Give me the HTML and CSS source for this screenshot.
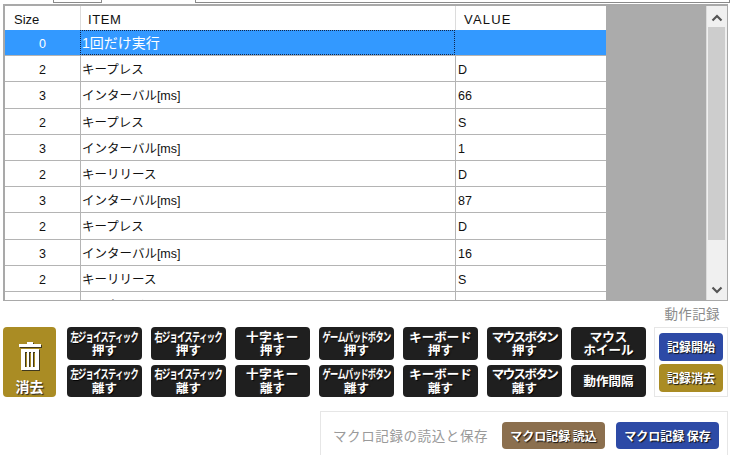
FILE: index.html
```html
<!DOCTYPE html>
<html lang="ja">
<head>
<meta charset="utf-8">
<title>マクロ記録</title>
<link rel="stylesheet" href="styles.css">
</head>
<body>
<div class="strip"><span class="stub stub-a"></span><span class="stub stub-b"></span></div>
<section class="panel">
  <div class="sheet">
    <div class="row head"><div class="c size">Size</div><div class="c item">ITEM</div><div class="c value">VALUE</div></div>
    <div class="row sel"><div class="c size">0</div><div class="c item">1回だけ実行</div><div class="c value"></div></div>
    <div class="row"><div class="c size">2</div><div class="c item">キープレス</div><div class="c value">D</div></div>
    <div class="row"><div class="c size">3</div><div class="c item">インターバル[ms]</div><div class="c value">66</div></div>
    <div class="row"><div class="c size">2</div><div class="c item">キープレス</div><div class="c value">S</div></div>
    <div class="row"><div class="c size">3</div><div class="c item">インターバル[ms]</div><div class="c value">1</div></div>
    <div class="row"><div class="c size">2</div><div class="c item">キーリリース</div><div class="c value">D</div></div>
    <div class="row"><div class="c size">3</div><div class="c item">インターバル[ms]</div><div class="c value">87</div></div>
    <div class="row"><div class="c size">2</div><div class="c item">キープレス</div><div class="c value">D</div></div>
    <div class="row"><div class="c size">3</div><div class="c item">インターバル[ms]</div><div class="c value">16</div></div>
    <div class="row"><div class="c size">2</div><div class="c item">キーリリース</div><div class="c value">S</div></div>
    <div class="row"><div class="c size">3</div><div class="c item">インターバル[ms]</div><div class="c value"></div></div>
  </div>
  <div class="blank"></div>
  <div class="scroll">
    <div class="arrow arrow-up"><svg width="12" height="8" viewBox="0 0 12 8"><path d="M1.5 6.5 6 2l4.5 4.5" fill="none" stroke="#555" stroke-width="2.2"/></svg></div>
    <div class="thumb"></div>
    <div class="track"></div>
    <div class="arrow"><svg width="12" height="8" viewBox="0 0 12 8"><path d="M1.5 1.5 6 6l4.5-4.5" fill="none" stroke="#555" stroke-width="2.2"/></svg></div>
  </div>
</section>
<div class="caption">動作記録</div>
<section class="actions">
  <button class="trash">
    <svg class="trash-icon" width="26" height="32" viewBox="0 0 26 32"><g fill="#1c1c1c" transform="translate(1 1)" opacity=".75"><path d="M9 1h6v2h8v3H1V3h8zM3 8h18v21H3zM7 11v15h2V11zm4 0v15h2V11zm4 0v15h2V11z" fill-rule="evenodd"/></g><path d="M9 1h6v2h8v3H1V3h8zM3 8h18v21H3zM7 11v15h2V11zm4 0v15h2V11zm4 0v15h2V11z" fill="#fff" fill-rule="evenodd"/></svg>
    <span>消去</span>
  </button>
  <div class="pad">
    <button class="key"><span class="tight">左ジョイスティック</span><span>押す</span></button>
    <button class="key"><span class="tight">右ジョイスティック</span><span>押す</span></button>
    <button class="key"><span class="wide">十字キー</span><span>押す</span></button>
    <button class="key"><span class="tight">ゲームパッドボタン</span><span>押す</span></button>
    <button class="key"><span>キーボード</span><span>押す</span></button>
    <button class="key"><span class="mid">マウスボタン</span><span>押す</span></button>
    <button class="key"><span>マウス</span><span>ホイール</span></button>
    <button class="key"><span class="tight">左ジョイスティック</span><span>離す</span></button>
    <button class="key"><span class="tight">右ジョイスティック</span><span>離す</span></button>
    <button class="key"><span class="wide">十字キー</span><span>離す</span></button>
    <button class="key"><span class="tight">ゲームパッドボタン</span><span>離す</span></button>
    <button class="key"><span>キーボード</span><span>離す</span></button>
    <button class="key"><span class="mid">マウスボタン</span><span>離す</span></button>
    <button class="key"><span>動作間隔</span></button>
  </div>
  <div class="record">
    <button class="rec blue">記録開始</button>
    <button class="rec gold">記録消去</button>
  </div>
</section>
<section class="files">
  <span class="files-label">マクロ記録の読込と保存</span>
  <button class="file brown">マクロ記録 読込</button>
  <button class="file navy">マクロ記録 保存</button>
</section>
</body>
</html>
```
FILE: styles.css
```css
* { box-sizing: border-box; }
html, body { margin: 0; padding: 0; }
body {
  width: 733px;
  height: 455px;
  overflow: hidden;
  background: #fff;
  font-family: "Noto Sans CJK JP", "Liberation Sans", sans-serif;
  color: #111;
}
button { font-family: inherit; border: 0; padding: 0; margin: 0; }

.strip { height: 4px; position: relative; display: flex; }
.stub { height: 3px; background: #fff; border: 1px solid #8a8a8a; border-top: 0; }
.stub-a { width: 49px; margin-left: 53px; }
.stub-b { width: 535px; margin-left: 93px; }

.panel {
  display: flex;
  width: 725px;
  height: 297px;
  margin-left: 3px;
  border: solid #a9a9a9;
  border-width: 2px 1px 1px 2px;
  background: #ababab;
  overflow: hidden;
}
.sheet { width: 601px; flex: none; background: #fff; }
.row {
  display: grid;
  grid-template-columns: 75px 375px 151px;
  height: 26.2px;
  border-bottom: 1px solid #b4b4b4;
  font-family: "Liberation Sans", "Noto Sans CJK JP", sans-serif;
  font-size: 12.5px;
  line-height: 25px;
  background: #fff;
}
.row.head { height: 24px; border-bottom: 0; font-size: 13px; line-height: 23px; }
.c { padding: 2px 0 0 1px; white-space: nowrap; overflow: hidden; }
.item { padding-left: 1px; }
.value { padding-left: 2px; }
.item, .value { border-left: 1px solid #b4b4b4; }
.size { text-align: center; padding-left: 0; }
.head .size { text-align: left; padding-left: 9px; }
.head .item { padding-left: 7px; letter-spacing: .6px; }
.head .value { padding-left: 8px; letter-spacing: 1.2px; }
.head .item, .head .value { border-left-color: #dcdcdc; }
.row.sel { background: #3399ff; color: #fff; }
.sel .item { border: 1px dotted #10254a; font-size: 14px; line-height: 22px; padding: 1px 0 0 1px; }
.sel .value { border-left: 0; }

.blank { width: 100px; flex: none; }
.scroll {
  flex: 1;
  display: flex;
  flex-direction: column;
  background: #f0f0f0;
  border-left: 1px solid #dcdcdc;
  border-right: 1px solid #f0f0f0;
}
.arrow { height: 20px; flex: none; display: flex; align-items: center; justify-content: center; }
.arrow-up { height: 21px; padding-top: 2px; }
.thumb { height: 213px; flex: none; margin: 0 1px; background: #cdcdcd; }
.track { flex: 1; }

.caption {
  margin: 3px 13px 0 0;
  height: 23px;
  line-height: 18px;
  text-align: right;
  font-size: 13.5px;
  color: #8c8c8c;
  letter-spacing: .4px;
}

.actions { display: flex; margin-left: 3px; height: 70px; }
.trash {
  width: 53px;
  height: 70px;
  flex: none;
  margin-right: 11px;
  background: #aa8c24;
  border-radius: 4px;
  color: #fff;
  display: flex;
  flex-direction: column;
  align-items: center;
  padding-top: 14px;
  font-size: 14px;
  font-weight: 700;
  line-height: 18px;
  text-shadow: 1px 1px 1px #222;
}
.trash-icon { margin: 0 0 4px 2px; }
.pad {
  display: grid;
  grid-template-columns: repeat(7, 75px);
  grid-template-rows: 32.5px 32.5px;
  gap: 5px 9px;
  flex: none;
}
.key {
  background: #1f1f1f;
  border-radius: 4px;
  color: #fff;
  font-size: 12.5px;
  font-weight: 700;
  line-height: 13.5px;
  display: flex;
  flex-direction: column;
  align-items: center;
  justify-content: center;
  white-space: nowrap;
  text-shadow: 1px 1px 1px #000, 0 0 2px #666;
}
.key .tight { font-size: 12.5px; letter-spacing: -1px; transform: scaleX(.66); }
.key .mid { letter-spacing: -1.6px; }
.key .wide { letter-spacing: .8px; }
.record {
  width: 74px;
  flex: none;
  margin-left: 8px;
  border: 1px solid #e6e6e6;
  padding: 5px 4px 4px;
  display: flex;
  flex-direction: column;
  gap: 3.5px;
}
.rec {
  height: 27.5px;
  border-radius: 4px;
  color: #fff;
  font-size: 12px;
  font-weight: 700;
  text-shadow: 1px 1px 1px #111;
}
.blue { background: #2d4aa6; }
.gold { background: #aa8c24; }

.files {
  margin: 14px 5px 0 320px;
  height: 44px;
  border: 1px solid #e6e6e6;
  border-bottom: 0;
  display: flex;
  align-items: flex-start;
  padding: 10px 0 0 12px;
}
.files-label { width: 169px; font-size: 13.5px; line-height: 26px; color: #9a9a9a; letter-spacing: .6px; }
.file {
  width: 103px;
  height: 27px;
  border-radius: 4px;
  color: #fff;
  font-size: 12px;
  font-weight: 700;
  text-shadow: 1px 1px 1px #111;
}
.brown { background: #8b6f4e; margin-right: 11px; }
.navy { background: #2d4aa6; }
```
